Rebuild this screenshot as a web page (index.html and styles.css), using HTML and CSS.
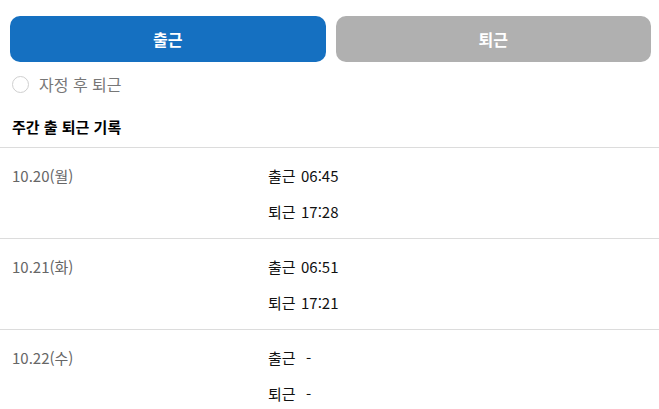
FILE: index.html
```html
<!DOCTYPE html>
<html lang="ko">
<head>
<meta charset="utf-8">
<link rel="stylesheet" href="styles.css">
</head>
<body>
<div class="top">
  <div class="buttons">
    <button class="btn btn-in">출근</button>
    <button class="btn btn-out">퇴근</button>
  </div>
  <label class="radio-row"><span class="radio"></span><span class="radio-label">자정 후 퇴근</span></label>
  <h2 class="heading">주간 출 퇴근 기록</h2>
</div>
<ul class="records">
  <li class="record">
    <div class="date">10.20(월)</div>
    <div class="times">
      <div class="time"><span class="kind">출근</span><span class="val">06:45</span></div>
      <div class="time"><span class="kind">퇴근</span><span class="val">17:28</span></div>
    </div>
  </li>
  <li class="record">
    <div class="date">10.21(화)</div>
    <div class="times">
      <div class="time"><span class="kind">출근</span><span class="val">06:51</span></div>
      <div class="time"><span class="kind">퇴근</span><span class="val">17:21</span></div>
    </div>
  </li>
  <li class="record">
    <div class="date">10.22(수)</div>
    <div class="times">
      <div class="time"><span class="kind">출근</span><span class="val val-empty">-</span></div>
      <div class="time"><span class="kind">퇴근</span><span class="val val-empty">-</span></div>
    </div>
  </li>
</ul>
</body>
</html>
```
FILE: styles.css
```css
* { box-sizing: border-box; }
html, body { margin: 0; padding: 0; background: #fff; }
body {
  font-family: "Noto Sans CJK KR", "Noto Sans", sans-serif;
  color: #111;
  overflow: hidden;
}
.top { padding: 16px 8px 0 10px; }
.buttons { display: flex; gap: 10px; }
.btn {
  flex: 1;
  height: 46px;
  border: none;
  border-radius: 10px;
  color: #fff;
  font-family: inherit;
  font-size: 16px;
  font-weight: 700;
  padding: 0;
}
.btn-in { background: #1570c1; }
.btn-out { background: #b0b0b0; }
.radio-row {
  display: flex;
  align-items: center;
  margin-top: 11px;
  padding-left: 2px;
  height: 22px;
}
.radio {
  width: 17px;
  height: 17px;
  border: 1px solid #cfcfcf;
  border-radius: 50%;
  margin-right: 10px;
}
.radio-label { font-size: 16px; color: #777; line-height: 22px; }
.heading {
  margin: 22px 0 10px 2px;
  font-size: 15px;
  line-height: 20px;
  font-weight: 700;
  color: #000;
}
.records { list-style: none; margin: 0; padding: 0; }
.record {
  display: grid;
  grid-template-columns: 256px 1fr;
  border-top: 1px solid #dcdcdc;
  padding: 10px 0 8px 12px;
}
.date { font-size: 15px; color: #666; line-height: 36px; }
.time { font-size: 15px; line-height: 36px; color: #111; display: flex; }
.kind { width: 33px; }
.val-empty { padding-left: 5px; }
```
